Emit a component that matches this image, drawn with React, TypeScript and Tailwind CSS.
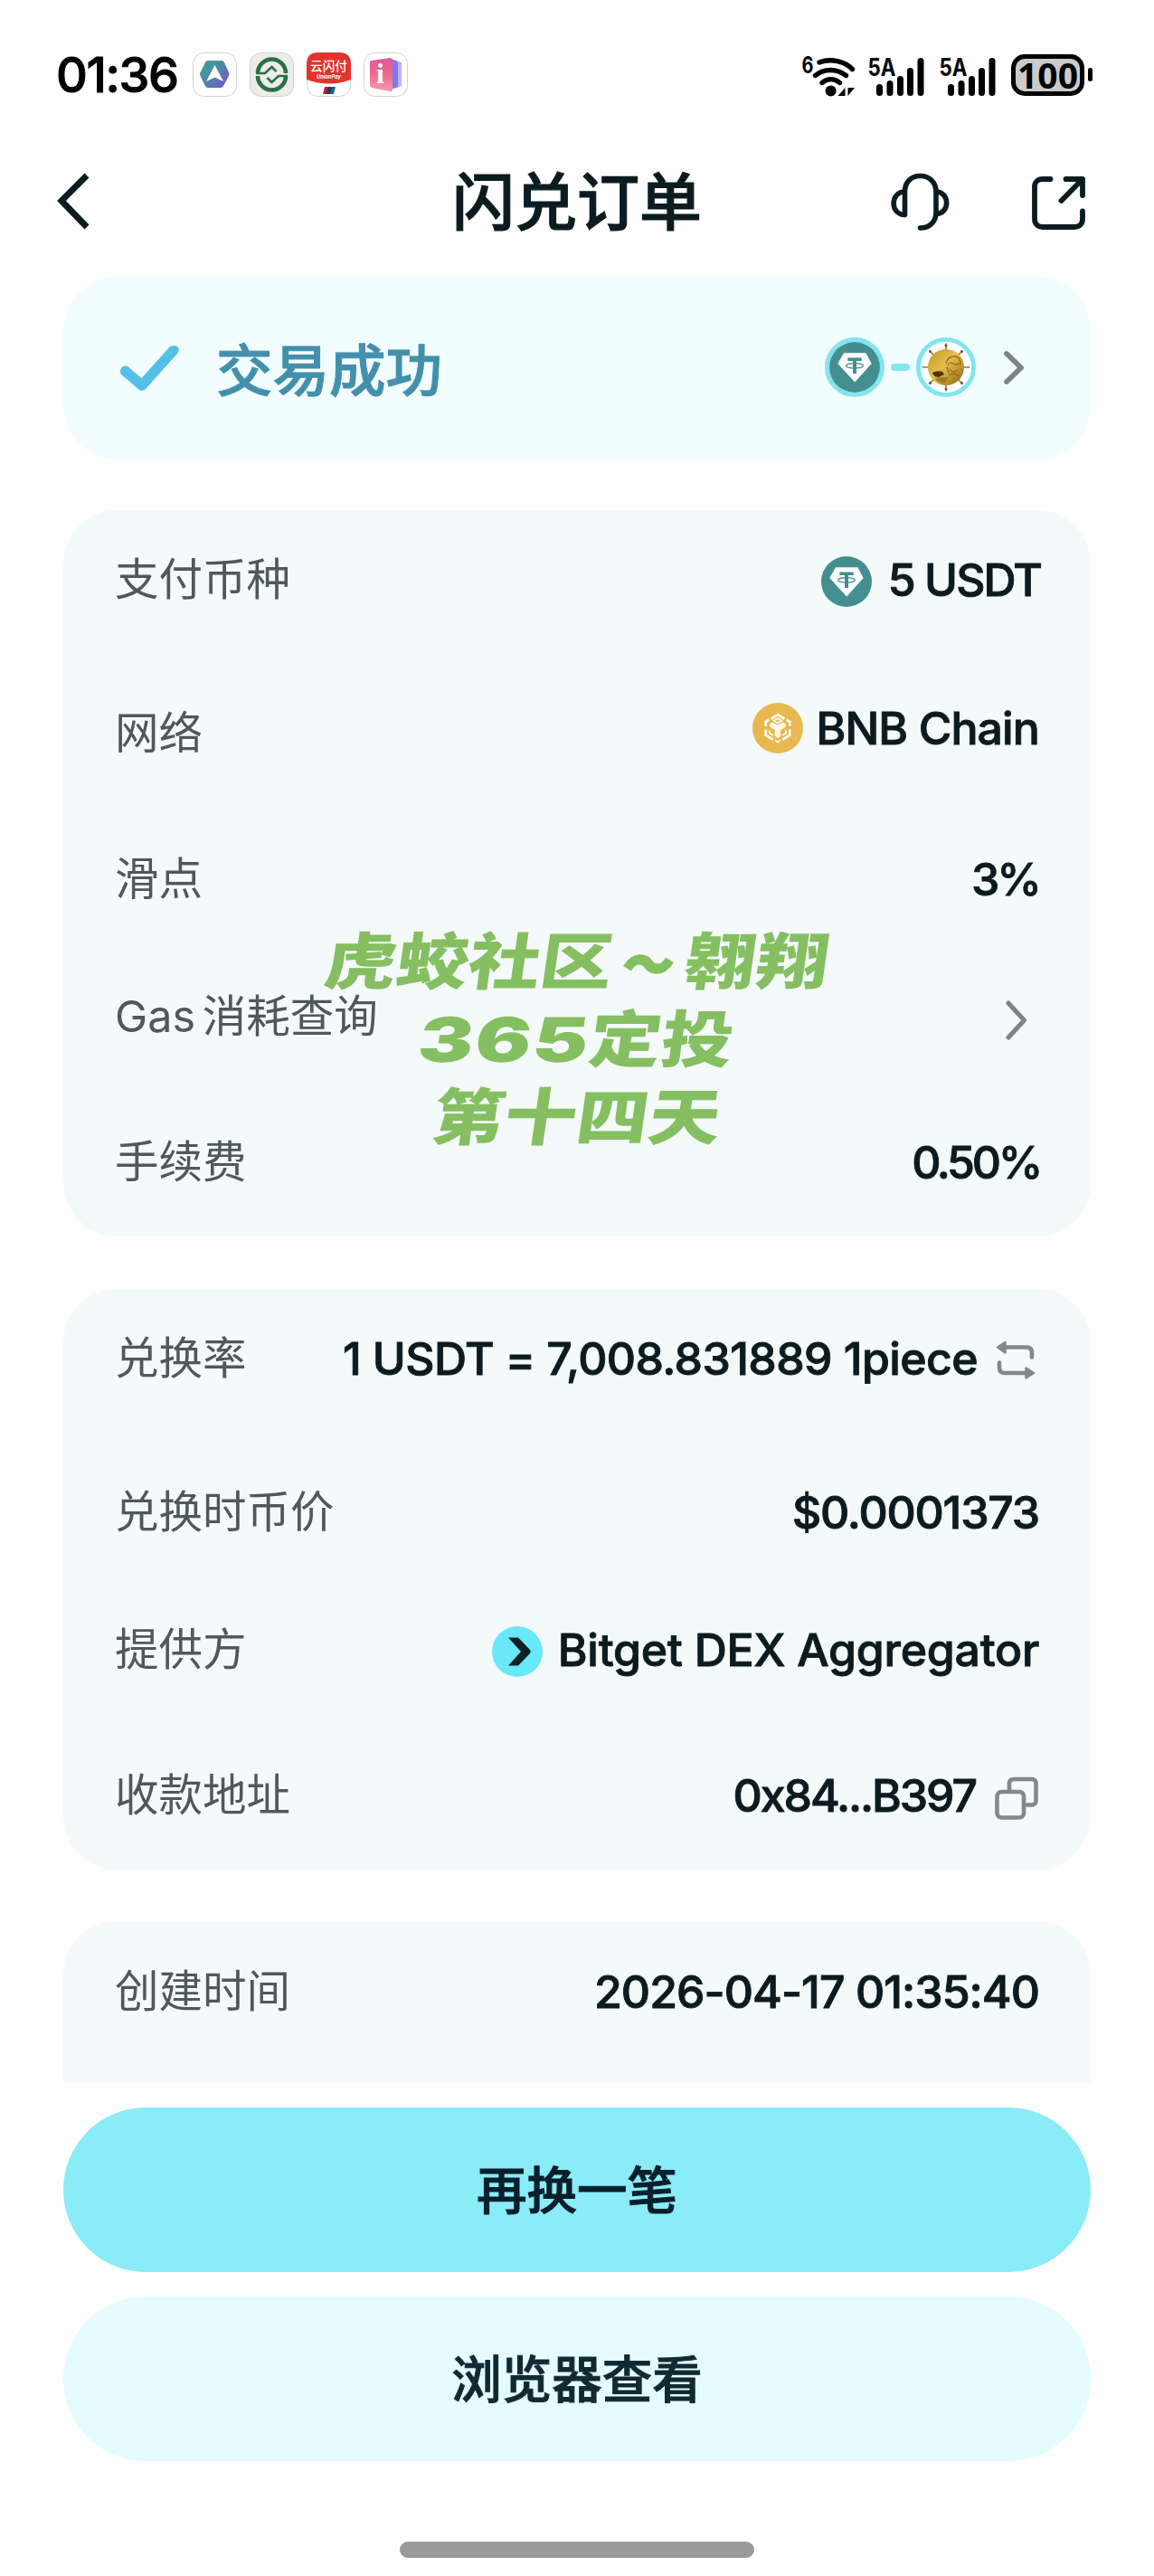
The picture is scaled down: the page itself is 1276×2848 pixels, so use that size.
import type { ReactNode } from "react";

const SANS = "font-['Inter','Noto_Sans_CJK_SC',sans-serif]";

/* ---------- status bar ---------- */

function AppBadges() {
  return (
    <div className="flex gap-[14px]">
      <svg width="49" height="49" viewBox="0 0 49 49">
        <defs>
          <linearGradient id="hexFill" x1="0" y1="0" x2="1" y2="1">
            <stop offset="0.3" stopColor="#43979c" />
            <stop offset="1" stopColor="#7a4fd0" />
          </linearGradient>
        </defs>
        <rect x="0.5" y="0.5" width="48" height="48" rx="12" fill="#fff" stroke="#d2d2d2" />
        <path d="M17 9h15q2 0 3 2l5 11q1 2 0 4l-6 11q-1 2-3 2H17q-2 0-3-2L8.500 26q-1-2 0-4L14 11q1-2 3-2z" fill="url(#hexFill)" />
        <path d="M24.500 14l9.500 18-9.500-4.500L15 32z" fill="#fff" />
      </svg>
      <svg width="49" height="49" viewBox="0 0 49 49">
        <rect x="0.5" y="0.5" width="48" height="48" rx="12" fill="#ececec" stroke="#d2d2d2" />
        <g fill="none" stroke="#2a7240" strokeWidth="4.600">
          <path d="M9 23a15.500 15.500 0 0 1 31 0" />
          <path d="M40 26a15.500 15.500 0 0 1-31 0" />
          <path d="M7 23h10l7.500-7 5 5M42 26H32l-7.500 7-5-5" strokeWidth="2.600" />
        </g>
      </svg>
      <svg width="49" height="49" viewBox="0 0 49 49">
        <rect x="0.500" y="0.500" width="48" height="48" rx="12" fill="#fff" stroke="#d2d2d2" />
        <path d="M0 30V13Q0 0 13 0h23q13 0 13 13v17q-24 9-49 0z" fill="#e2342c" />
        <text x="24.500" y="20" textAnchor="middle" textLength="41" lengthAdjust="spacingAndGlyphs" fontSize="14" fontWeight="500" fill="#fff">云闪付</text>
        <text x="24.500" y="29" textAnchor="middle" textLength="27" lengthAdjust="spacingAndGlyphs" fontSize="6.500" fontWeight="700" fontStyle="italic" fill="#fff">UnionPay</text>
        <path d="M20 38h5l-2 8h-5z" fill="#b5273a" />
        <path d="M24 38h5l-2 8h-5z" fill="#1b3a66" />
        <path d="M28 38h4l-2 8h-4z" fill="#1d6a70" />
      </svg>
      <svg width="49" height="49" viewBox="0 0 49 49">
        <defs>
          <linearGradient id="bookFill" x1="0" y1="0" x2="0" y2="1">
            <stop offset="0" stopColor="#e0559a" />
            <stop offset="0.5" stopColor="#ee6a8c" />
            <stop offset="1" stopColor="#f79ab0" />
          </linearGradient>
        </defs>
        <rect x="0.500" y="0.500" width="48" height="48" rx="12" fill="#fff" stroke="#d2d2d2" />
        <path d="M30 8l10 2q2 0 2 2v24q0 2-2 2l-10 2z" fill="#b9b4fb" />
        <path d="M30 7l6 2q2 1 2 3v25q0 2-2 2l-6 2z" fill="#8078ee" />
        <path d="M9 9l20-3q3 0 3 3v32q0 3-3 2L9 39q-2-1-2-3V12q0-3 2-3z" fill="url(#bookFill)" />
        <text x="18.500" y="34" textAnchor="middle" fontFamily="Liberation Serif, serif" fontSize="32" fontWeight="700" fill="#fff">i</text>
      </svg>
    </div>
  );
}

function Wifi() {
  return (
    <svg width="64" height="52" viewBox="885 54 64 52">
      <text x="886.500" y="77.500" fontSize="26" fontWeight="700" textLength="13" lengthAdjust="spacingAndGlyphs">6</text>
      <g fill="none" stroke="#000" strokeWidth="5.400" strokeLinecap="round">
        <path d="M906 66C919 61 934 65 942.500 73.500" />
        <path d="M901.500 80.500C911 72.500 925 72.500 935.500 80.500" />
        <path d="M909 88.500C915 83.500 922.500 83.500 928.500 88.500" />
      </g>
      <circle cx="918.600" cy="97.500" r="6" />
      <path d="M934.500 94v9h-8zM937.500 94h7.500l-7.500 9z" />
    </svg>
  );
}

function Signal() {
  return (
    <svg width="65" height="52" viewBox="958 54 65 52">
      <text x="959.500" y="81" fontSize="27" fontWeight="700" textLength="31" lengthAdjust="spacingAndGlyphs">5A</text>
      <g stroke="#000" strokeWidth="7" strokeLinecap="round">
        <path d="M972.500 93.500V99.500M984 89.500V99.500M995.500 84.500V99.500M1006.500 75.500V99.500M1018 64.500V99.500" />
      </g>
    </svg>
  );
}

function StatusBar() {
  return (
    <div className="flex h-[165px] items-center pl-[62px] pr-[68px] text-black">
      <span className="w-[151px] text-[54px] font-medium leading-none tracking-[-1.400px] whitespace-nowrap [-webkit-text-stroke:1px]">01:36</span>
      <AppBadges />
      <div className="ml-auto flex items-center">
        <Wifi />
        <div className="ml-[9px]"><Signal /></div>
        <div className="ml-[14px]"><Signal /></div>
        <div className="ml-[16px] flex h-[46px] w-[81px] items-center justify-center rounded-[15px] border-[5px] border-black bg-[#cbcbcb] font-['Noto_Sans',sans-serif] text-[39px] font-bold leading-none">
          100
        </div>
        <div className="ml-[4px] h-[15px] w-[5px] rounded-full bg-black" />
      </div>
    </div>
  );
}

/* ---------- icons ---------- */

function BackIcon() {
  return (
    <svg width="40" height="66" viewBox="0 0 40 66" fill="none" stroke="#0b1c21" strokeWidth="7">
      <path d="M34 3L6 31L34 60" />
    </svg>
  );
}

function HeadsetIcon() {
  return (
    <svg width="66" height="66" viewBox="0 0 66 66" fill="none" stroke="#0b1c21" strokeWidth="5.600" strokeLinecap="round">
      <path d="M15.500 46.500V21C15.500 11 22 3.500 32.500 3.500S50 11 50 21V44C50 54 43 61 32.500 61" />
      <path d="M15.500 46.500C-1 46.500-1 21 15.500 21M50 21C65.500 21 65.500 45.500 50 45.500" strokeLinecap="butt" />
    </svg>
  );
}

function ShareIcon() {
  return (
    <svg width="62" height="62" viewBox="0 0 62 62" fill="none" stroke="#0b1c21" strokeWidth="5.800" strokeLinecap="round" strokeLinejoin="round">
      <path d="M21.500 5H13C7.500 5 4 8.500 4 13V49C4 54.500 7.500 58 13 58H48C53.500 58 57 54.500 57 49V40.500" />
      <path d="M38.500 5H57V23M57 5L33.500 29" />
    </svg>
  );
}

function Chevron({ size }: { size: "sm" | "md" }) {
  return size === "sm" ? (
    <svg width="24" height="38" viewBox="0 0 24 38" fill="none" stroke="#7d8487" strokeWidth="5.800" strokeLinecap="round" strokeLinejoin="round">
      <path d="M4 4L20 19.500L4 35" />
    </svg>
  ) : (
    <svg width="24" height="44" viewBox="0 0 24 44" fill="none" stroke="#7d8487" strokeWidth="5" strokeLinecap="round" strokeLinejoin="round">
      <path d="M3 3L20.500 22L3 41" />
    </svg>
  );
}

function CheckIcon() {
  return (
    <svg width="70" height="56" viewBox="0 0 70 56" fill="none" stroke="#52c1e8" strokeWidth="9.500" strokeLinecap="round" strokeLinejoin="round">
      <path d="M7 32L26 48L62 8" />
      <path d="M7.500 31L26 47L60 9" strokeWidth="11" />
    </svg>
  );
}

function UsdtIcon() {
  return (
    <svg width="56" height="56" viewBox="-28 -28 56 56">
      <circle r="28" fill="#438f8f" />
      <path d="M-12 -15.700H12.500L18.700 -4L0.200 16.500L-18.700 -4z" fill="#fff" strokeLinejoin="round" />
      <path d="M-7.700 -10.500H7.700V-7H2V7H-2V-7H-7.700z" fill="#438f8f" />
      <ellipse cy="-1.600" rx="9.300" ry="2.700" fill="none" stroke="#438f8f" strokeWidth="1.300" />
    </svg>
  );
}

function BnbIcon() {
  return (
    <svg width="56" height="56" viewBox="-28 -28 56 56">
      <circle r="28" fill="#e7b850" />
      <g fill="none" stroke="#fff9e6" strokeWidth="2.800" strokeLinejoin="miter">
        <path d="M-7.500 -10.300L0 -14.800L7.500 -10.300" />
        <path d="M-4.500 -8.300L0 -10.800L4.500 -8.300L0 -5.700z" strokeWidth="1.600" />
        <path d="M-13.300 -2V-7L-9.500 -9.300M13.300 -2V-7L9.500 -9.300" />
        <path d="M-13.300 1.500V8L-5 12.800M13.300 1.500V8L5 12.800" />
        <path d="M-9 2.500V5.700L-5 8M9 2.500V5.700L5 8" strokeWidth="2" />
      </g>
      <path d="M-9 -4.800L-5.500 -6.500L0 -3.300L5.500 -6.500L9 -4.800V-1.500L3.200 2V9L0 11L-3.200 9V2L-9 -1.500z" fill="#fff9e6" />
      <path d="M-3 12.500L0 14.300L3 12.500V14.500L0 16.500L-3 14.500z" fill="#fff9e6" />
    </svg>
  );
}

function GoldCoinIcon() {
  return (
    <svg width="56" height="56" viewBox="-28 -28 56 56">
      <defs>
        <linearGradient id="gold" x1="0" y1="0" x2="1" y2="1">
          <stop offset="0" stopColor="#c8951d" />
          <stop offset="0.450" stopColor="#e3bd4c" />
          <stop offset="1" stopColor="#8a6413" />
        </linearGradient>
      </defs>
      <circle r="28" fill="#fff" />
      <g stroke="#8f7440" strokeWidth="1.500" strokeLinecap="round">
        <path d="M0 -26V26M-26 0H26M-18 -18L18 18M18 -18L-18 18" />
      </g>
      <g fill="#6b5430">
        <circle cy="-24" r="1.500" />
        <circle cy="24" r="1.500" />
        <circle cx="-17.500" cy="-17.500" r="1.500" />
        <circle cx="17.500" cy="-17.500" r="1.500" />
        <circle cx="-17.500" cy="17.500" r="1.500" />
        <circle cx="17.500" cy="17.500" r="1.500" />
      </g>
      <circle r="20" fill="url(#gold)" />
      <path d="M0 -4Q2 -12 9 -12T16 -3M2 -2Q4 -7 8 -4T14 -5M4 2Q8 8 13 3M3 9Q10 5 15 10M1 0L3 6" fill="none" stroke="#9a6f18" strokeWidth="1.300" />
      <path d="M-15 6Q-9 3 -4 5L-2 8L-8 11Q-14 11 -15 6z" fill="#4d370c" />
      <path d="M-12 13Q-3 9 3 12L-2 18Q-8 17 -12 13z" fill="#a87a1c" />
    </svg>
  );
}

function BitgetIcon() {
  return (
    <svg width="56" height="56" viewBox="-28 -28 56 56">
      <circle r="28" fill="#68e8f8" />
      <path d="M-10 -15.500H1L14 -2Q15.500 0 14 2L1 15.500H-10L4 0z" fill="#0d2127" />
    </svg>
  );
}

function SwapIcon() {
  return (
    <svg width="44" height="44" viewBox="0 0 44 44" fill="none" stroke="#83898b" strokeWidth="4.600" strokeLinecap="round">
      <path d="M11 7.500H34Q40 7.500 40 13.500V18.500" />
      <path d="M4 24.500V30Q4 36 10 36H33" />
      <path d="M2 7.500L10.500 2V13.500zM42 36L33.500 30.500V41.500z" fill="#83898b" stroke="#83898b" strokeWidth="2.500" strokeLinejoin="round" />
    </svg>
  );
}

function CopyIcon() {
  return (
    <svg width="48" height="48" viewBox="0 0 48 48" fill="none" stroke="#83898b" strokeWidth="4.600" strokeLinejoin="round">
      <rect x="2.500" y="17" width="29.500" height="28.500" rx="5" />
      <path d="M16 17V8Q16 3 21 3H40.500Q45.500 3 45.500 8V26.500Q45.500 31.500 40.500 31.500H32" />
    </svg>
  );
}

/* ---------- rows ---------- */

type RowProps = {
  label: string;
  labelClass?: string;
  className?: string;
  children?: ReactNode;
};

function Row({ label, labelClass = "", className = "", children }: RowProps) {
  return (
    <div className={`flex h-[60px] items-center justify-between pl-[57px] pr-[57px] ${className}`}>
      <span className={`text-[48.500px] leading-[60px] whitespace-pre text-[#4f585b] ${labelClass}`}>{label}</span>
      <div className="flex items-center text-[50px] leading-[60px] font-medium whitespace-pre text-[#0c1b20] [-webkit-text-stroke:0.900px]">{children}</div>
    </div>
  );
}

const CARD = "relative mx-[70px] bg-[#f4f9fa]";
const WATERMARK_LINE = "scale-x-[1.17] -skew-x-[7deg]";

export default function App() {
  return (
    <div className={`flex h-[2848px] w-[1276px] flex-col overflow-hidden bg-[#fefefe] ${SANS}`}>
      <StatusBar />

      <header className="flex h-[118px] shrink-0 items-center justify-between pl-[62px] pr-[74px]">
        <div className="flex w-[232px]"><BackIcon /></div>
        <h1 className="text-[69px] leading-none font-medium text-[#0b1c21] [-webkit-text-stroke:1.200px]">闪兑订单</h1>
        <div className="flex w-[220px] items-center justify-end gap-[89px]">
          <HeadsetIcon />
          <ShareIcon />
        </div>
      </header>

      <section className="mx-[70px] mt-[23px] flex h-[202px] shrink-0 items-center rounded-[60px] bg-[#f2fdff] pr-[73px] pl-[61px]">
        <CheckIcon />
        <span className="mt-[7px] ml-[38px] text-[62.500px] leading-none font-medium text-[#438fac] [-webkit-text-stroke:1px]">交易成功</span>
        <div className="mb-[3px] ml-auto flex items-center">
          <div className="rounded-full border-[5px] border-[#83e5f0]"><UsdtIcon /></div>
          <div className="mx-[7px] h-[8px] w-[21px] rounded-full bg-[#83e5f0]" />
          <div className="rounded-full border-[5px] border-[#83e5f0]"><GoldCoinIcon /></div>
          <div className="ml-[30px]"><Chevron size="sm" /></div>
        </div>
      </section>

      <section className={`${CARD} mt-[56px] h-[803px] shrink-0 rounded-[60px] pt-[47px]`}>
        <Row label="支付币种">
          <div className="mt-[3px]"><UsdtIcon /></div>
          <span className="mr-[-2px] ml-[18px] tracking-[-1.900px]">5 USDT</span>
        </Row>
        <Row label="网络" className="mt-[104px]" labelClass="mt-[12px]">
          <BnbIcon />
          <span className="ml-[14px] tracking-[-0.900px]">BNB Chain</span>
        </Row>
        <Row label="滑点" className="mt-[107px]">
          <span className="tracking-[-3px]">3%</span>
        </Row>
        <Row label="Gas 消耗查询" className="mt-[93px]" labelClass="mb-[2px] [word-spacing:-6px]">
          <div className="mt-[5px] mr-[13px]"><Chevron size="md" /></div>
        </Row>
        <Row label="手续费" className="mt-[100px]">
          <span className="mr-[-1px] tracking-[-3.300px]">0.50%</span>
        </Row>
        <div className="absolute inset-x-0 top-[456px] text-center text-[68px] leading-[86px] font-black whitespace-nowrap text-[#85bf61]">
          <div className={WATERMARK_LINE}>
            虎蛟社区<span className="inline-block translate-y-[4px] scale-x-[0.700] scale-y-[0.850] [-webkit-text-stroke:3px]">～</span>翱翔
          </div>
          <div className={WATERMARK_LINE}>
            <span className="mr-[10px] ml-[9px] inline-block scale-x-[1.150] tracking-[1.500px]">365</span>定投
          </div>
          <div className={WATERMARK_LINE}>第十四天</div>
        </div>
      </section>

      <section className={`${CARD} mt-[58px] h-[642px] shrink-0 rounded-[60px] pt-[47px]`}>
        <Row label="兑换率">
          <span className="tracking-[-0.600px]">1 USDT = 7,008.831889 1piece</span>
          <div className="mt-[4px] mr-[4px] ml-[20px]"><SwapIcon /></div>
        </Row>
        <Row label="兑换时币价" className="mt-[110px]">
          <span className="tracking-[-1.200px]">$0.0001373</span>
        </Row>
        <Row label="提供方" className="mt-[92px]">
          <div className="mt-[3px]"><BitgetIcon /></div>
          <span className="ml-[17px] tracking-[-0.250px]">Bitget DEX Aggregator</span>
        </Row>
        <Row label="收款地址" className="mt-[101px]">
          <span className="tracking-[-2.100px]">0x84...B397</span>
          <div className="mt-[5px] mr-[1px] ml-[21px]"><CopyIcon /></div>
        </Row>
      </section>

      <section className={`${CARD} mt-[57px] h-[178px] shrink-0 rounded-t-[60px] pt-[48px]`}>
        <Row label="创建时间">
          <span className="tracking-[-0.950px]">2026-04-17 01:35:40</span>
        </Row>
      </section>

      <div className="mt-[28px] flex shrink-0 flex-col gap-[27px] px-[70px]">
        <button className="h-[182px] rounded-full bg-[#8aecf6] pt-[2px] text-[55.500px] leading-none font-medium text-[#0a1f2c] [-webkit-text-stroke:1px]">再换一笔</button>
        <button className="h-[182px] rounded-full bg-[#e4fcfe] pt-[2px] text-[55.500px] leading-none font-medium text-[#102a30] [-webkit-text-stroke:1px]">浏览器查看</button>
      </div>

      <div className="mx-auto mt-[89px] h-[18px] w-[392px] shrink-0 rounded-full bg-[#9a9a9a]" />
    </div>
  );
}
